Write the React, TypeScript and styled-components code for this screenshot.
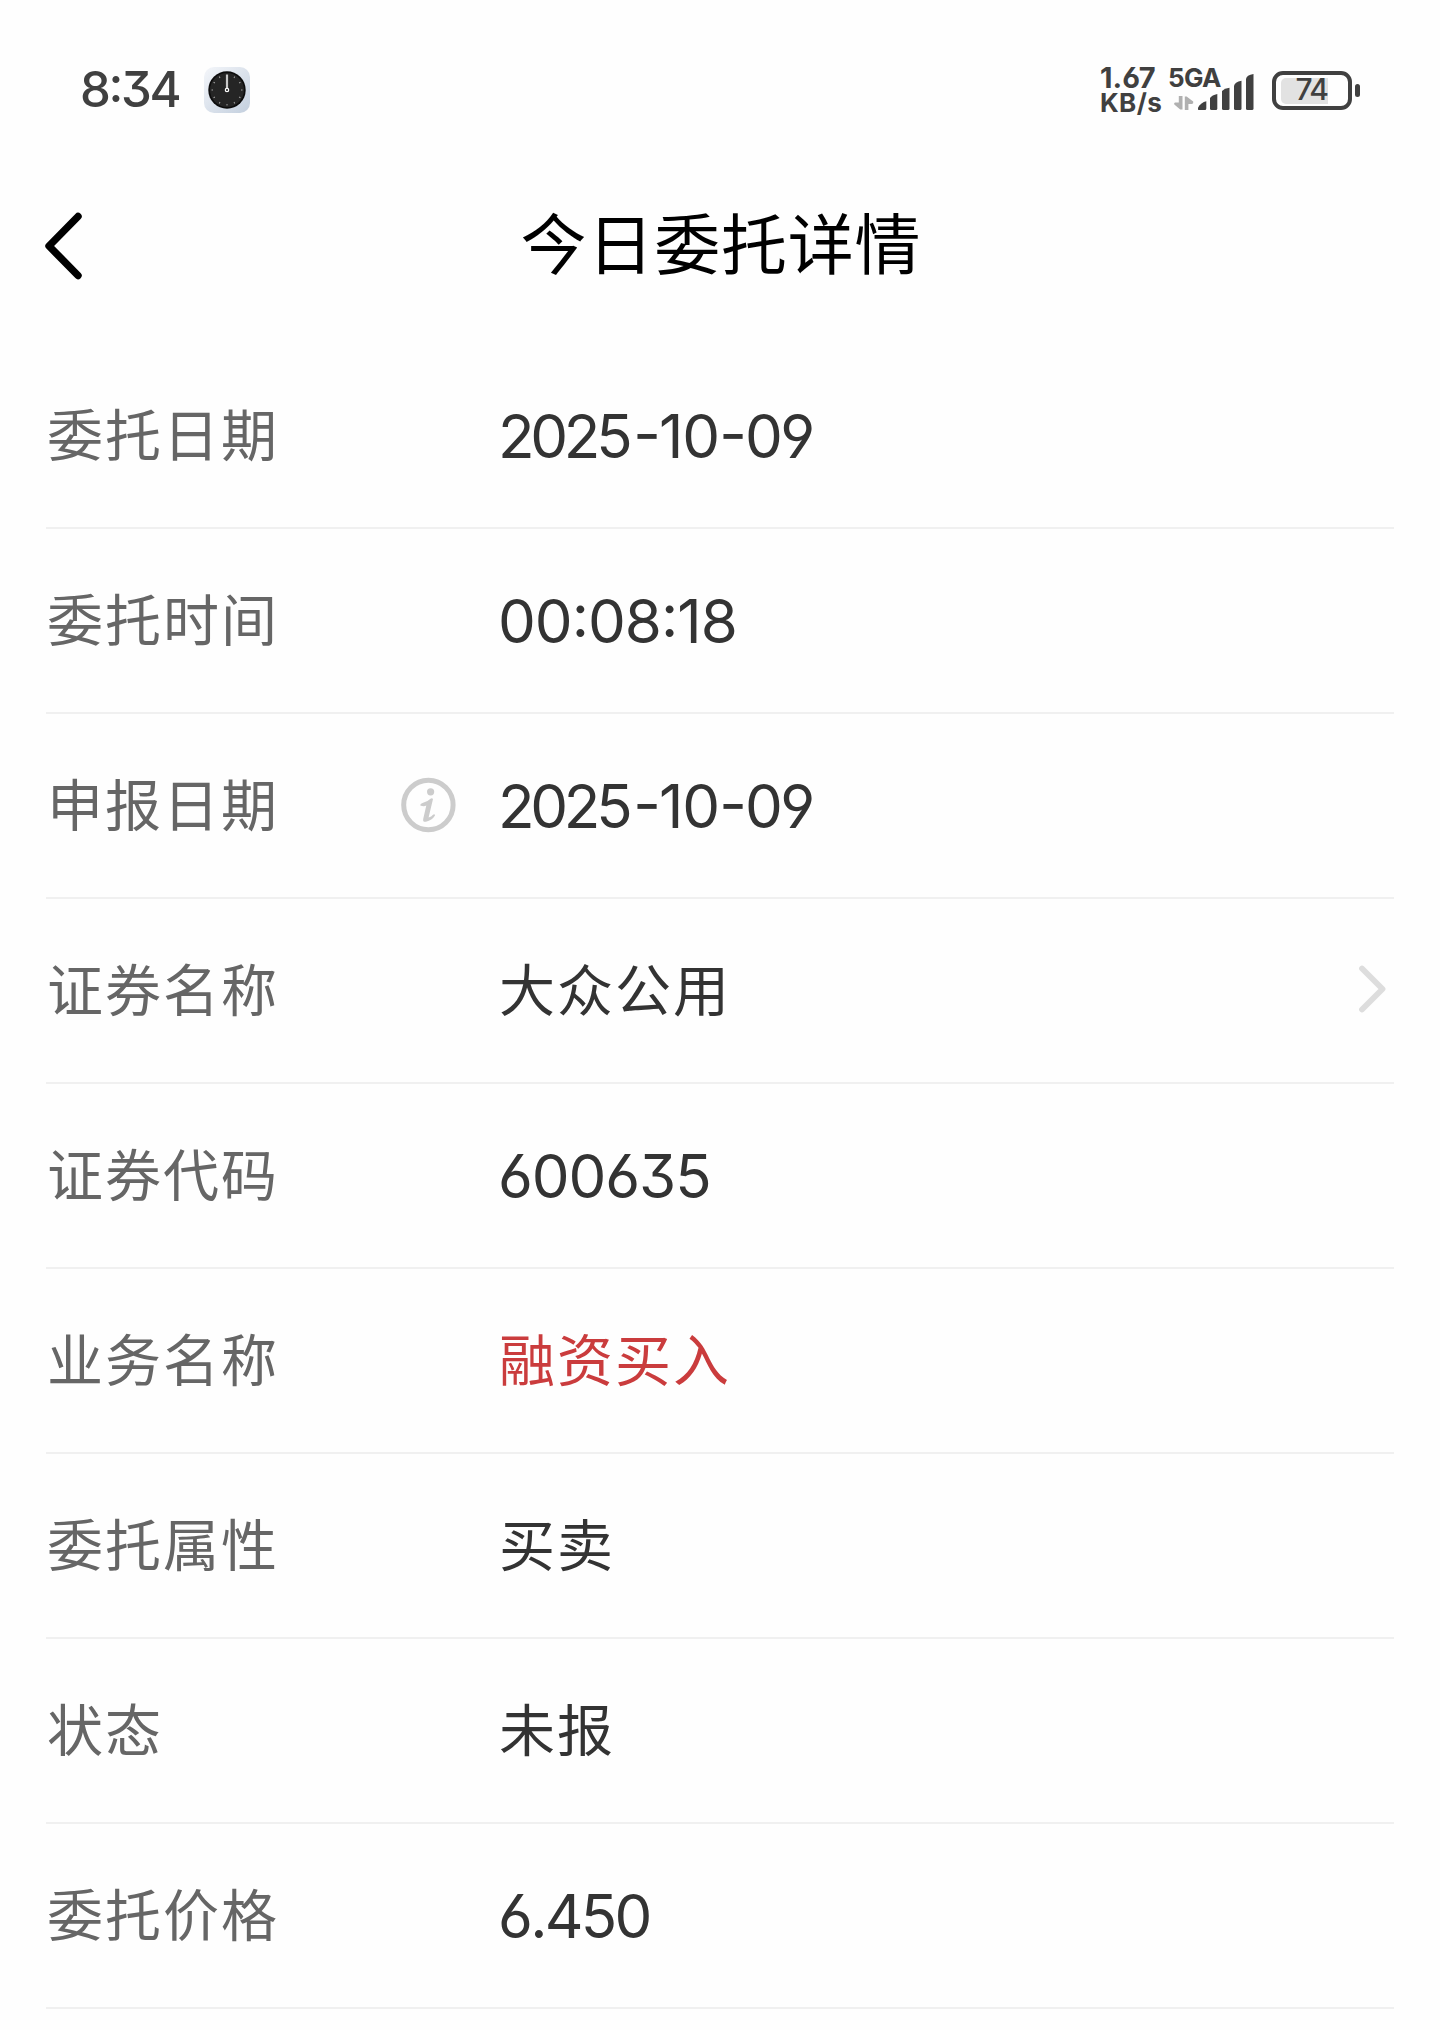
import React from "react";
import styled, { createGlobalStyle } from "styled-components";

const GlobalStyle = createGlobalStyle`
  * { box-sizing: border-box; }
  html, body { margin: 0; background: #fefefe; }
  body {
    font-family: Inter, "Noto Sans CJK SC", sans-serif;
    font-feature-settings: "case" 1, "cv03" 1, "cv04" 1, "cv09" 1;
    overflow: hidden;
  }
`;

const Screen = styled.main`
  width: 1440px;
  height: 2030px;
  overflow: hidden;
  background: #fefefe;
  display: flex;
  flex-direction: column;
`;

const StatusBar = styled.header`
  height: 150px;
  padding: 30px 80px 0 80px;
  display: flex;
  align-items: center;
  justify-content: space-between;
  color: #404040;
`;

const StatusGroup = styled.div`
  display: flex;
  align-items: center;
`;

const Clock = styled.time`
  width: 124px;
  font-size: 49px;
  line-height: 60px;
  font-weight: 500;
  letter-spacing: -2.3px;
`;

const NetSpeed = styled.div`
  width: 68px;
  display: flex;
  flex-direction: column;
  font-weight: 700;
`;

const SpeedValue = styled.span`
  font-size: 29px;
  line-height: 25px;
  letter-spacing: 0;
`;

const SpeedUnit = styled.span`
  font-size: 26px;
  line-height: 25px;
  letter-spacing: 0.4px;
`;

const Signal = styled.div`
  position: relative;
  width: 88px;
  height: 42px;
  margin-right: 16px;
`;

const NetworkType = styled.span`
  position: absolute;
  left: 0;
  top: -3px;
  font-size: 26px;
  line-height: 24px;
  font-weight: 700;
  letter-spacing: -0.6px;
`;

const SignalArt = styled.svg`
  display: block;
`;

const Battery = styled.div`
  display: flex;
  align-items: center;
  gap: 3px;
`;

const BatteryShell = styled.div`
  width: 80px;
  height: 39px;
  padding: 3px 4.5px;
  border: 4px solid #404040;
  border-radius: 11px;
  display: flex;
`;

const BatteryLevel = styled.div`
  width: 47px;
  height: 26px;
  padding-bottom: 3px;
  border-radius: 5px 0 0 5px;
  background: #e2e2e2;
  display: flex;
  justify-content: flex-end;
  align-items: center;
  font-size: 30px;
  line-height: 26px;
  font-weight: 500;
  letter-spacing: -1.5px;
`;

const BatteryTip = styled.div`
  width: 5px;
  height: 13px;
  border-radius: 2.5px;
  background: #404040;
`;

const TitleBar = styled.div`
  height: 194px;
  padding: 0 45px 4px;
  display: grid;
  grid-template-columns: 100px 1fr 100px;
  align-items: center;
`;

const BackButton = styled.button`
  border: 0;
  padding: 2px 0 0;
  background: none;
  display: flex;
`;

const Title = styled.h1`
  margin: 0;
  padding-left: 2px;
  text-align: center;
  font-size: 66px;
  line-height: 90px;
  font-weight: 400;
  letter-spacing: 0.8px;
  color: #000;
`;

const Details = styled.dl`
  margin: 0;
  padding: 0 46px;
`;

const Row = styled.div`
  height: 185px;
  border-bottom: 2px solid #f0f0f0;
  display: grid;
  grid-template-columns: 355px 97px 1fr auto;
  align-items: center;
`;

const Label = styled.dt`
  padding-left: 1px;
  font-size: 56px;
  line-height: 80px;
  letter-spacing: 2px;
  color: #666;
`;

const Hint = styled.span`
  display: flex;
  padding-bottom: 2px;
`;

const Value = styled.dd<{ $digits?: boolean; $accent?: boolean; $spacing?: number }>`
  margin: 0;
  padding-left: ${(p) => (p.$digits ? 0 : 1)}px;
  font-size: ${(p) => (p.$digits ? 60 : 56)}px;
  line-height: 80px;
  letter-spacing: ${(p) => p.$spacing ?? 2}px;
  color: ${(p) => (p.$accent ? "#ca3c3d" : "#333")};
`;

const DatePart = styled.span<{ $spacing: number }>`
  letter-spacing: ${(p) => p.$spacing}px;
`;

const DateDash = styled.span<{ $lead: number }>`
  margin-left: ${(p) => p.$lead}px;
  letter-spacing: -2px;
`;

const More = styled.span`
  display: flex;
  padding: 0 8px 3px 0;
`;

function ClockAppIcon() {
  return (
    <svg width="46" height="46" viewBox="0 0 46 46">
      <defs>
        <linearGradient id="tile" x1="0" y1="0" x2="1" y2="1">
          <stop offset="0" stopColor="#f4f6fa" />
          <stop offset="1" stopColor="#c3cfde" />
        </linearGradient>
      </defs>
      <rect width="46" height="46" rx="10" fill="url(#tile)" />
      <circle cx="23" cy="23" r="18.7" fill="#0c0c0c" />
      <circle cx="23" cy="23" r="17" fill="#252525" />
      {Array.from({ length: 11 }, (_, i) => (
        <line
          key={i}
          x1="23"
          y1="7.5"
          x2="23"
          y2="9"
          stroke="#a0a0a0"
          strokeWidth="1"
          transform={`rotate(${(i + 1) * 30} 23 23)`}
        />
      ))}
      <line x1="23" y1="7.5" x2="23" y2="22" stroke="#c8c8c8" strokeWidth="2.2" />
      <circle cx="23" cy="23" r="1.7" fill="#222" stroke="#fff" strokeWidth="1.2" />
    </svg>
  );
}

function SignalBars() {
  return (
    <SignalArt width="88" height="42" viewBox="0 0 88 42">
      <g fill="#b0b0b0">
        <path d="M14.5 27V40.5H12.2L6.3 35.4Q5.6 33.6 7.2 33.4H10.8V27Z" />
        <path d="M16.8 41V27.5H18.6L25.2 32.6Q25.8 34.8 24 35H20.4V41Z" />
      </g>
      <g fill="#404040">
        <path d="M30 40.5V38.6Q33 33.5 38.3 32.3V39.5Q38.3 41 36.8 41H30.5Z" />
        <path d="M42 39.5V29Q44 26 49.3 25V39.5Q49.3 41 47.8 41H43.5Q42 41 42 39.5Z" />
        <path d="M54 39.5V22Q56.5 19.4 61.5 18.8V39.5Q61.5 41 60 41H55.5Q54 41 54 39.5Z" />
        <path d="M66 39.5V17Q66.5 13 73.5 11.7V39.5Q73.5 41 72 41H67.5Q66 41 66 39.5Z" />
        <path d="M78 39.5V10Q78.5 6 85.5 5V39.5Q85.5 41 84 41H79.5Q78 41 78 39.5Z" />
      </g>
    </SignalArt>
  );
}

function BackIcon() {
  return (
    <svg width="38" height="70" viewBox="0 0 38 70" fill="none">
      <path d="M33 5.5L4 35L33 64.5" stroke="#000" strokeWidth="7.4" strokeLinecap="round" strokeLinejoin="round" />
    </svg>
  );
}

function InfoIcon() {
  return (
    <svg width="56" height="56" viewBox="0 0 56 56" fill="#ccc">
      <circle cx="27.4" cy="28" r="24.7" fill="none" stroke="#ccc" strokeWidth="5" />
      <circle cx="29.6" cy="14.8" r="3.6" />
      <path d="M19.3 28.6Q19 26.5 21.5 26Q27 24.5 29.5 21.8Q31 20.8 32 22L27.6 40.4Q30.5 39.8 32 37.8Q33.8 36.6 34 38.6Q31 43.6 25 44.8Q21.5 45.2 22.2 42L25.3 28.6Q23 30 19.3 28.6Z" />
    </svg>
  );
}

function MoreIcon() {
  return (
    <svg width="28" height="48" viewBox="0 0 28 48" fill="none">
      <path d="M4 3.5L24.5 24L4 44.5" stroke="#ddd" strokeWidth="5.8" strokeLinecap="round" strokeLinejoin="round" />
    </svg>
  );
}

function DateText({ value }: { value: string }) {
  const [year, month, day] = value.split("-");
  return (
    <>
      <DatePart $spacing={-4.3}>{year}</DatePart>
      <DateDash $lead={5}>-</DateDash>
      <DatePart $spacing={-1.2}>{month}</DatePart>
      <DateDash $lead={0.5}>-</DateDash>
      <DatePart $spacing={-2.4}>{day}</DatePart>
    </>
  );
}

type Item = {
  label: string;
  value: string;
  date?: boolean;
  digits?: boolean;
  spacing?: number;
  hint?: boolean;
  accent?: boolean;
  more?: boolean;
};

const items: Item[] = [
  { label: "委托日期", value: "2025-10-09", digits: true, date: true },
  { label: "委托时间", value: "00:08:18", digits: true, spacing: -1 },
  { label: "申报日期", value: "2025-10-09", digits: true, date: true, hint: true },
  { label: "证券名称", value: "大众公用", more: true },
  { label: "证券代码", value: "600635", digits: true, spacing: -1.1 },
  { label: "业务名称", value: "融资买入", accent: true },
  { label: "委托属性", value: "买卖" },
  { label: "状态", value: "未报" },
  { label: "委托价格", value: "6.450", digits: true, spacing: -2.7 },
];

export default function App() {
  return (
    <>
      <GlobalStyle />
      <Screen>
        <StatusBar>
          <StatusGroup>
            <Clock>8:34</Clock>
            <ClockAppIcon />
          </StatusGroup>
          <StatusGroup>
            <NetSpeed>
              <SpeedValue>1.67</SpeedValue>
              <SpeedUnit>KB/s</SpeedUnit>
            </NetSpeed>
            <Signal>
              <SignalBars />
              <NetworkType>5GA</NetworkType>
            </Signal>
            <Battery>
              <BatteryShell>
                <BatteryLevel>74</BatteryLevel>
              </BatteryShell>
              <BatteryTip />
            </Battery>
          </StatusGroup>
        </StatusBar>
        <TitleBar>
          <BackButton aria-label="返回">
            <BackIcon />
          </BackButton>
          <Title>今日委托详情</Title>
        </TitleBar>
        <Details>
          {items.map((item) => (
            <Row key={item.label}>
              <Label>{item.label}</Label>
              <Hint>{item.hint && <InfoIcon />}</Hint>
              <Value $digits={item.digits} $accent={item.accent} $spacing={item.spacing}>
                {item.date ? <DateText value={item.value} /> : item.value}
              </Value>
              <More>{item.more && <MoreIcon />}</More>
            </Row>
          ))}
        </Details>
      </Screen>
    </>
  );
}
